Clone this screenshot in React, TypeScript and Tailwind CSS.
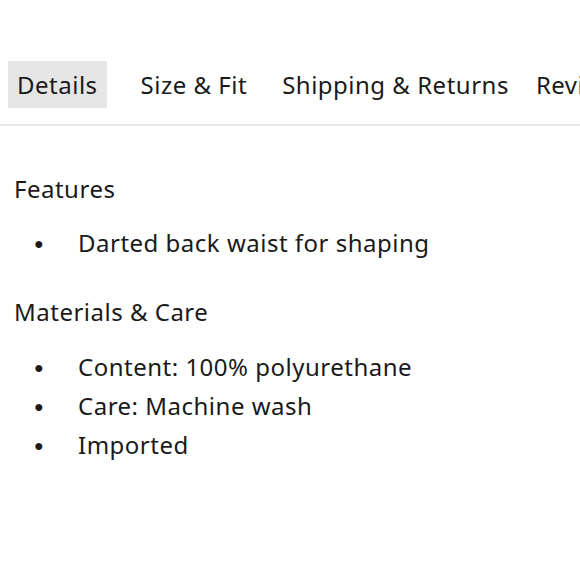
import React from "react";

const font = { fontFamily: "'Noto Sans', 'Open Sans', sans-serif" };

export default function App() {
  const tabs = [
    { t: "Details", c: "bg-[#e6e6e6]" },
    { t: "Size & Fit", c: "ml-[25px]" },
    { t: "Shipping & Returns", c: "ml-[17px]" },
    { t: "Reviews", c: "ml-[9px]" },
  ];
  return (
    <div className="w-[580px] h-[580px] overflow-hidden bg-white text-[#1a1a1a] tracking-[0.5px]" style={font}>
      <div className="pt-[61px] border-b-2 border-[#e8e8e8]">
        <div className="flex items-center pl-[8px] pb-[16px] whitespace-nowrap">
          {tabs.map(({ t, c }) => (
            <div key={t} className={`h-[47px] flex items-center px-[9px] text-[24px] leading-[30px] ${c}`}>
              {t}
            </div>
          ))}
        </div>
      </div>
      <div className="px-[14px] pt-[48px] text-[24px]">
        <div className="leading-[30px]">Features</div>
        <ul className="mt-[19px] mb-[35px]">
          <li className="flex items-center h-[39px] leading-[30px]">
            <span className="w-[64px] pl-[20px] text-[16px]">●</span>
            Darted back waist for shaping
          </li>
        </ul>
        <div className="leading-[30px]">Materials &amp; Care</div>
        <ul className="mt-[20px]">
          {["Content: 100% polyurethane", "Care: Machine wash", "Imported"].map((t) => (
            <li key={t} className="flex items-center h-[39px] leading-[30px]">
              <span className="w-[64px] pl-[20px] text-[16px]">●</span>
              {t}
            </li>
          ))}
        </ul>
      </div>
    </div>
  );
}
